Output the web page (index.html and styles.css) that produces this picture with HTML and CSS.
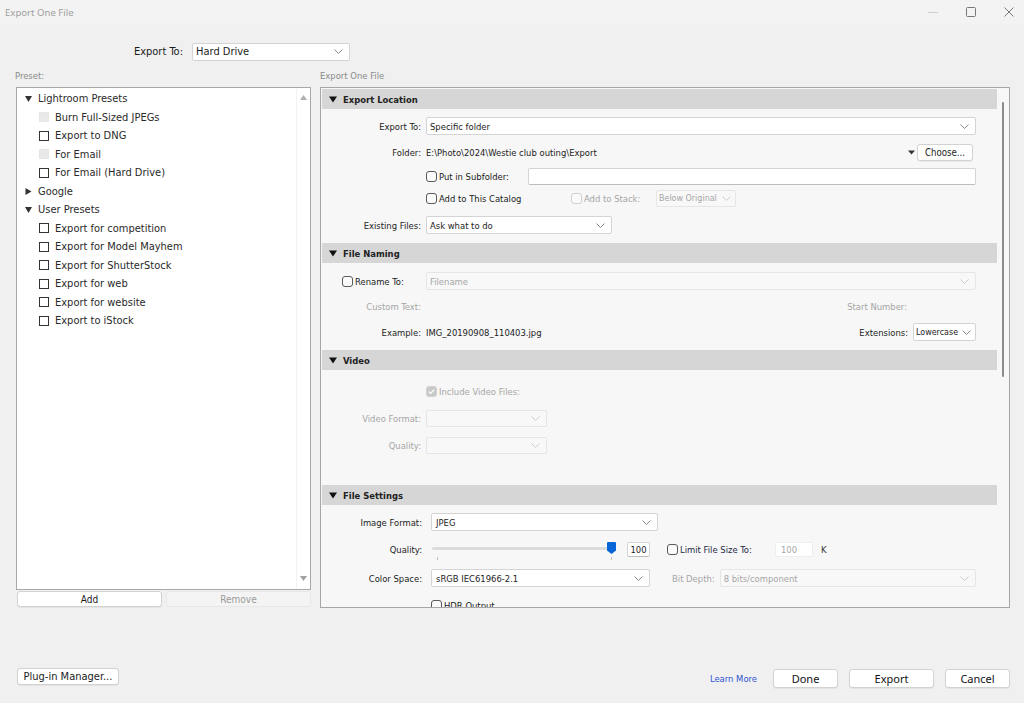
FILE: index.html
```html
<!DOCTYPE html>
<html>
<head>
<meta charset="utf-8">
<link rel="stylesheet" href="styles.css">
</head>
<body>
<div class="titlebar">
  <span class="title">Export One File</span>
  <div class="winctrls">
    <svg class="wc" width="10" height="10" viewBox="0 0 10 10"><path d="M0 5.5h10" stroke="#d0d0d0" stroke-width="1"/></svg>
    <svg class="wc" width="10" height="10" viewBox="0 0 10 10"><rect x="0.5" y="0.5" width="9" height="9" rx="1" fill="none" stroke="#777" stroke-width="1"/></svg>
    <svg class="wc" width="10" height="10" viewBox="0 0 10 10"><path d="M0.5 0.5L9.5 9.5M9.5 0.5L0.5 9.5" stroke="#777" stroke-width="1"/></svg>
  </div>
</div>

<div class="topbar">
  <span class="toplabel">Export To:</span>
  <div class="sel topsel"><span>Hard Drive</span><svg width="9" height="5" viewBox="0 0 9 5"><path d="M0.5 0.5L4.5 4.5L8.5 0.5" fill="none" stroke="#888"/></svg></div>
</div>

<div class="main">
  <div class="leftcol">
    <div class="caption">Preset:</div>
    <div class="listbox">
      <div class="tree">
        <div class="trow grp"><svg class="tri" width="7" height="7" viewBox="0 0 7 7"><path d="M0 1h7L3.5 7z" fill="#333"/></svg><span>Lightroom Presets</span></div>
        <div class="trow item"><span class="tcb dis"></span><span>Burn Full-Sized JPEGs</span></div>
        <div class="trow item"><span class="tcb"></span><span>Export to DNG</span></div>
        <div class="trow item"><span class="tcb dis"></span><span>For Email</span></div>
        <div class="trow item"><span class="tcb"></span><span>For Email (Hard Drive)</span></div>
        <div class="trow grp"><svg class="tri" width="7" height="7" viewBox="0 0 7 7"><path d="M0.5 0L6.5 3.5L0.5 7z" fill="#333"/></svg><span>Google</span></div>
        <div class="trow grp"><svg class="tri" width="7" height="7" viewBox="0 0 7 7"><path d="M0 1h7L3.5 7z" fill="#333"/></svg><span>User Presets</span></div>
        <div class="trow item"><span class="tcb"></span><span>Export for competition</span></div>
        <div class="trow item"><span class="tcb"></span><span>Export for Model Mayhem</span></div>
        <div class="trow item"><span class="tcb"></span><span>Export for ShutterStock</span></div>
        <div class="trow item"><span class="tcb"></span><span>Export for web</span></div>
        <div class="trow item"><span class="tcb"></span><span>Export for website</span></div>
        <div class="trow item"><span class="tcb"></span><span>Export to iStock</span></div>
      </div>
      <div class="lscroll">
        <svg width="7" height="5" viewBox="0 0 7 5"><path d="M0 5L3.5 0L7 5z" fill="#b0b0b0"/></svg>
        <svg width="7" height="5" viewBox="0 0 7 5"><path d="M0 0L3.5 5L7 0z" fill="#a0a0a0"/></svg>
      </div>
    </div>
    <div class="lbtns">
      <div class="btn sm">Add</div>
      <div class="btn sm disabled">Remove</div>
    </div>
  </div>

  <div class="rightcol">
    <div class="caption">Export One File</div>
    <div class="panel">
      <div class="scrollarea">

        <div class="sech"><svg width="8" height="7" viewBox="0 0 8 7"><path d="M0 0.5h8L4 6.5z" fill="#111"/></svg><span>Export Location</span></div>
        <div class="row mt8">
          <span class="lbl">Export To:</span>
          <div class="sel grow"><span>Specific folder</span><svg width="9" height="5" viewBox="0 0 9 5"><path d="M0.5 0.5L4.5 4.5L8.5 0.5" fill="none" stroke="#888"/></svg></div>
        </div>
        <div class="row mt8">
          <span class="lbl">Folder:</span>
          <span class="val">E:\Photo\2024\Westie club outing\Export</span>
          <span class="spacer"></span>
          <svg class="ddtri" width="7" height="5" viewBox="0 0 7 5"><path d="M0 0.5h7L3.5 4.5z" fill="#333"/></svg>
          <div class="btn choose">Choose...</div>
        </div>
        <div class="row mt6">
          <span class="lbl"></span>
          <label class="chk subf"><span class="cb"></span><span>Put in Subfolder:</span></label>
          <div class="inp grow"></div>
        </div>
        <div class="row mt4">
          <span class="lbl"></span>
          <label class="chk catg"><span class="cb"></span><span>Add to This Catalog</span></label>
          <label class="chk stack off"><span class="cb"></span><span>Add to Stack:</span></label>
          <div class="sel off w80"><span>Below Original</span><svg width="9" height="5" viewBox="0 0 9 5"><path d="M0.5 0.5L4.5 4.5L8.5 0.5" fill="none" stroke="#ccc"/></svg></div>
        </div>
        <div class="row mt9">
          <span class="lbl">Existing Files:</span>
          <div class="sel w186"><span>Ask what to do</span><svg width="9" height="5" viewBox="0 0 9 5"><path d="M0.5 0.5L4.5 4.5L8.5 0.5" fill="none" stroke="#888"/></svg></div>
        </div>

        <div class="sech mt9"><svg width="8" height="7" viewBox="0 0 8 7"><path d="M0 0.5h8L4 6.5z" fill="#111"/></svg><span>File Naming</span></div>
        <div class="row mt9">
          <label class="lbl chklbl"><span class="cb"></span><span>Rename To:</span></label>
          <div class="sel off grow"><span>Filename</span><svg width="9" height="5" viewBox="0 0 9 5"><path d="M0.5 0.5L4.5 4.5L8.5 0.5" fill="none" stroke="#ccc"/></svg></div>
        </div>
        <div class="row mt7">
          <span class="lbl dim">Custom Text:</span>
          <span class="spacer"></span>
          <span class="dim">Start Number:</span>
          <span class="startnum"></span>
        </div>
        <div class="row mt8">
          <span class="lbl">Example:</span>
          <span class="val">IMG_20190908_110403.jpg</span>
          <span class="spacer"></span>
          <span class="ext">Extensions:</span>
          <div class="sel w63"><span>Lowercase</span><svg width="9" height="5" viewBox="0 0 9 5"><path d="M0.5 0.5L4.5 4.5L8.5 0.5" fill="none" stroke="#888"/></svg></div>
        </div>

        <div class="sech mt9"><svg width="8" height="7" viewBox="0 0 8 7"><path d="M0 0.5h8L4 6.5z" fill="#111"/></svg><span>Video</span></div>
        <div class="row mt12">
          <span class="lbl"></span>
          <label class="chk off"><span class="cb on"><svg width="9" height="9" viewBox="0 0 9 9"><path d="M1.8 4.6L3.7 6.4L7.2 2.6" fill="none" stroke="#fff" stroke-width="1.3"/></svg></span><span>Include Video Files:</span></label>
        </div>
        <div class="row mt9">
          <span class="lbl dim">Video Format:</span>
          <div class="sel off w121"><span></span><svg width="9" height="5" viewBox="0 0 9 5"><path d="M0.5 0.5L4.5 4.5L8.5 0.5" fill="none" stroke="#ccc"/></svg></div>
        </div>
        <div class="row mt9">
          <span class="lbl dim">Quality:</span>
          <div class="sel off w121"><span></span><svg width="9" height="5" viewBox="0 0 9 5"><path d="M0.5 0.5L4.5 4.5L8.5 0.5" fill="none" stroke="#ccc"/></svg></div>
        </div>

        <div class="sech mt31"><svg width="8" height="7" viewBox="0 0 8 7"><path d="M0 0.5h8L4 6.5z" fill="#111"/></svg><span>File Settings</span></div>
        <div class="row fs mt8">
          <span class="lbl">Image Format:</span>
          <div class="sel w227"><span>JPEG</span><svg width="9" height="5" viewBox="0 0 9 5"><path d="M0.5 0.5L4.5 4.5L8.5 0.5" fill="none" stroke="#888"/></svg></div>
        </div>
        <div class="row fs mt9">
          <span class="lbl">Quality:</span>
          <div class="slider">
            <span class="track"></span>
            <span class="tick t1"></span>
            <span class="tick t2"></span>
            <svg class="thumb" width="9" height="12" viewBox="0 0 9 12"><path d="M1 0h7a1 1 0 0 1 1 1v7.5L4.5 12L0 8.5V1a1 1 0 0 1 1-1z" fill="#0a66d8"/></svg>
          </div>
          <div class="inp num">100</div>
          <label class="chk limit"><span class="cb"></span><span>Limit File Size To:</span></label>
          <div class="inp off num2">100</div>
          <span class="kunit">K</span>
        </div>
        <div class="row fs mt11">
          <span class="lbl">Color Space:</span>
          <div class="sel w219"><span>sRGB IEC61966-2.1</span><svg width="9" height="5" viewBox="0 0 9 5"><path d="M0.5 0.5L4.5 4.5L8.5 0.5" fill="none" stroke="#888"/></svg></div>
          <span class="dim bitlbl">Bit Depth:</span>
          <div class="sel off grow"><span>8 bits/component</span><svg width="9" height="5" viewBox="0 0 9 5"><path d="M0.5 0.5L4.5 4.5L8.5 0.5" fill="none" stroke="#ccc"/></svg></div>
        </div>
        <div class="row fs mt9">
          <span class="lbl"></span>
          <label class="chk"><span class="cb"></span><span>HDR Output</span></label>
        </div>
        <div class="row fs mt9">
          <span class="lbl"></span>
        </div>
      </div>
      <div class="pscroll"><span class="pthumb"></span></div>
    </div>
  </div>
</div>

<div class="footer">
  <div class="btn plug">Plug-in Manager...</div>
  <span class="spacer"></span>
  <a class="learn">Learn More</a>
  <div class="btn big done">Done</div>
  <div class="btn big export">Export</div>
  <div class="btn big cancel">Cancel</div>
</div>
</body>
</html>
```

FILE: styles.css
```css
* { box-sizing: border-box; margin: 0; padding: 0; }
html, body { width: 1024px; height: 703px; overflow: hidden; }
body {
  background: #f0f0f0;
  font-family: "DejaVu Sans Condensed", "DejaVu Sans", sans-serif;
  font-size: 9.4px;
  color: #1c1c1c;
}

/* title bar */
.titlebar {
  height: 24px;
  background: #f3f3f3;
  display: flex;
  align-items: center;
  justify-content: space-between;
  padding-left: 5px;
}
.title { font-family: "Noto Sans", sans-serif; font-size: 9.6px; color: #a0a0a0; }
.winctrls { display: flex; gap: 28px; margin-right: 10px; align-items: center; }
.wc { display: block; }

/* top */
.topbar {
  margin-top: 18px;
  height: 19px;
  display: flex;
  align-items: center;
  padding-left: 100px;
}
.toplabel { width: 83px; text-align: right; margin-right: 9px; font-size: 11px; color: #1c1c1c; }
.topsel { width: 158px; height: 19px; font-size: 11px; }

/* main area */
.main {
  display: flex;
  gap: 9px;
  padding: 0 14px 0 16px;
  margin-top: 8px;
}
.caption { height: 14px; line-height: 14px; color: #8a8a8a; margin-bottom: 4px; font-size: 9.4px; }
.leftcol { width: 295px; display: flex; flex-direction: column; }
.leftcol .caption { margin-left: -1px; }
.rightcol { flex: 1; display: flex; flex-direction: column; }

.listbox {
  height: 503px;
  border: 1px solid #a8a8a8;
  background: #fff;
  display: flex;
}
.tree { flex: 1; padding-top: 1.5px; font-size: 11px; color: #2a2a2a; }
.trow { height: 18.5px; display: flex; align-items: center; white-space: nowrap; }
.grp { padding-left: 8px; }
.grp .tri { margin-right: 6px; }
.item { padding-left: 22px; }
.tcb {
  width: 10px; height: 10px;
  border: 1px solid #333;
  background: #fff;
  margin-right: 6px;
  flex: none;
}
.tcb.dis { border-color: #e6e6e6; background: #e9e9e9; }
.lscroll {
  width: 14px;
  display: flex;
  flex-direction: column;
  justify-content: space-between;
  align-items: center;
  padding: 7px 0 8px;
  border-left: 1px solid #f2f2f2;
}
.lbtns { display: flex; gap: 4px; margin-top: 1px; padding-left: 1px; }
.lbtns .btn { flex: 1; }

/* buttons */
.btn {
  background: #fff;
  border: 1px solid #d2d2d2;
  border-radius: 3px;
  box-shadow: 0 1px 0 rgba(0,0,0,0.05);
  display: flex;
  align-items: center;
  justify-content: center;
  color: #1c1c1c;
  white-space: nowrap;
}
.btn.sm { height: 16px; font-size: 10px; }
.btn.disabled { background: #f4f4f4; border-color: #e8e8e8; color: #9a9a9a; box-shadow: none; }

/* right panel */
.panel {
  height: 521px;
  border: 1px solid #a6a6a6;
  background: #f7f7f7;
  display: flex;
  overflow: hidden;
}
.scrollarea { flex: 1; overflow: hidden; padding: 1px 0 0 1px; }
.pscroll { width: 12px; position: relative; }
.pthumb {
  position: absolute;
  left: 5px; top: 14px;
  width: 2px; height: 275px;
  background: #8a8a8a;
  border-radius: 1px;
}

.sech {
  height: 20px;
  background: #d6d6d6;
  display: flex;
  align-items: center;
  padding-left: 7px;
  font-weight: bold;
  color: #222;
  font-size: 9.4px;
}
.sech svg { margin-right: 6px; }

.row {
  height: 18px;
  display: flex;
  align-items: center;
  padding-right: 21px;
  white-space: nowrap;
}
.lbl { width: 99px; text-align: right; margin-right: 5px; flex: none; }
.fs .lbl { width: 100px; margin-right: 9px; }
.chklbl { display: flex; align-items: center; justify-content: flex-start; padding-left: 20px; }
.val { color: #1c1c1c; }
.dim { color: #a6a6a6; }
.spacer { flex: 1; }
.grow { flex: 1; }

.sel {
  height: 18px;
  background: #fff;
  border: 1px solid #d4d4d4;
  border-radius: 2px;
  display: flex;
  align-items: center;
  justify-content: space-between;
  padding: 0 6px 0 3px;
  color: #1c1c1c;
  overflow: hidden;
}
.sel > svg { flex: none; margin-left: 2px; }
.sel.off { background: #f8f8f8; border-color: #e6e6e6; color: #a6a6a6; }
.w80 { width: 80px; height: 17px; padding: 0 4px 0 2px; font-size: 8.9px; }
.w186 { width: 186px; }
.w63 { width: 63px; padding: 0 4px 0 2px; font-size: 8.9px; }
.w121 { width: 121px; height: 17px; }
.w227 { width: 227px; padding-left: 4px; }
.w219 { width: 219px; padding-left: 4px; }

.inp {
  height: 17px;
  background: #fff;
  border: 1px solid #d4d4d4;
  border-bottom-color: #bdbdbd;
  border-radius: 2px;
}
.inp.off { background: #fff; border-color: #eee; color: #a6a6a6; }

.chk { display: flex; align-items: center; }
.cb {
  width: 11px; height: 11px;
  border: 1px solid #5a5a5a;
  border-radius: 3px;
  background: #fafafa;
  margin-right: 2px;
  flex: none;
  display: flex; align-items: center; justify-content: center;
}
.chklbl .cb { margin-right: 2px; }
.chk.off { color: #a6a6a6; }
.chk.off .cb { border-color: #d0d0d0; }
.cb.on { background: #c9c9c9; border-color: #c9c9c9; }
.subf { width: 102px; }
.catg { width: 145px; }
.stack { width: 85px; }
.ddtri { margin-right: 2px; }
.choose { width: 56px; height: 17px; margin-right: 3px; margin-left: 0; font-size: 9.6px; }
.startnum { width: 69px; }
.ext { margin-right: 5px; }

/* slider */
.slider { position: relative; width: 184px; height: 18px; margin-left: 1px; }
.track { position: absolute; left: 0; right: 0; top: 7px; height: 3px; background: #dcdcdc; border-radius: 2px; }
.tick { position: absolute; top: 17px; width: 1px; height: 3px; background: #c0c0c0; }
.t1 { left: 5px; }
.t2 { left: 179px; }
.thumb { position: absolute; left: 175px; top: 2px; }
.num { width: 23px; height: 15px; margin-left: 11px; display: flex; align-items: center; justify-content: center; }
.limit { width: 108px; margin-left: 17px; color: #1e2b48; }
.num2 { width: 38px; height: 15px; display: flex; align-items: center; padding-left: 5px; }
.kunit { margin-left: 8px; color: #333; }
.bitlbl { margin-left: 22px; margin-right: 5px; }

.mt4 { margin-top: 4px; }
.mt6 { margin-top: 6px; }
.mt7 { margin-top: 7px; }
.mt8 { margin-top: 8px; }
.mt9 { margin-top: 9px; }
.mt11 { margin-top: 11px; }
.mt12 { margin-top: 12px; }
.mt31 { margin-top: 31px; }

/* footer */
.footer {
  margin-top: 60px;
  display: flex;
  align-items: flex-start;
  padding: 0 14px 0 17px;
}
.plug { width: 102px; height: 17px; font-size: 11px; }
.learn { color: #2f55d4; font-size: 9.4px; margin-top: 5px; margin-right: 16px; }
.big { height: 19px; margin-top: 1px; font-family: "Noto Sans", sans-serif; font-size: 11px; color: #111; }
.done { width: 65px; }
.export { width: 85px; margin-left: 11px; }
.cancel { width: 65px; margin-left: 11px; }
```
